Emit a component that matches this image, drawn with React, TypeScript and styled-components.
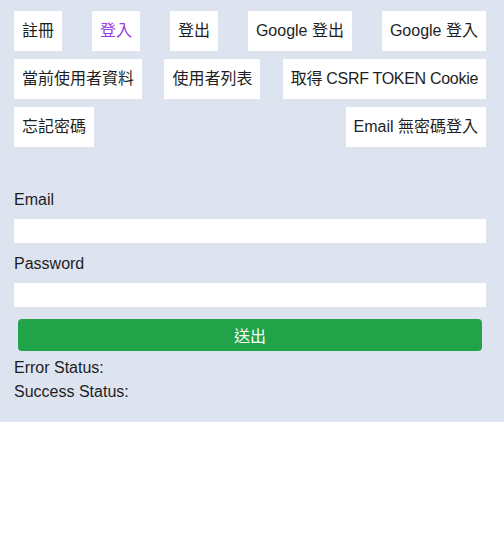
import React from "react";
import styled, { createGlobalStyle } from "styled-components";

const Global = createGlobalStyle`
  html, body {
    margin: 0;
    padding: 0;
    background: #ffffff;
  }
  body {
    font-family: "Liberation Sans", Arial, "Noto Sans CJK TC", sans-serif;
    font-size: 16px;
    color: #1d1d1f;
  }
  * { box-sizing: border-box; }
`;

const Page = styled.div`
  background: #dee4ef;
  padding: 11px 18px 18px 14px;
`;

const Nav = styled.nav`
  display: flex;
  flex-wrap: wrap;
  justify-content: space-between;
  row-gap: 8px;
`;

const NavButton = styled.a<{ $active?: boolean; $tight?: boolean }>`
  display: block;
  background: #ffffff;
  height: 40px;
  line-height: 40px;
  padding: 0 8px;
  font-size: 16px;
  letter-spacing: ${(p) => (p.$tight ? "-0.3px" : "normal")};
  color: ${(p) => (p.$active ? "#9a3ee0" : "#1f1f1f")};
  text-decoration: none;
  white-space: nowrap;
  cursor: pointer;
`;

const Form = styled.form`
  margin-top: 41px;
  display: flex;
  flex-direction: column;
`;

const Label = styled.label`
  display: block;
  line-height: 24px;
  font-size: 16px;
  color: #1d1d1f;
`;

const Input = styled.input<{ $gapAfter: number }>`
  display: block;
  width: 100%;
  height: 24px;
  border: none;
  outline: none;
  background: #ffffff;
  padding: 0 4px;
  margin: 7px 0 ${(p) => p.$gapAfter}px 0;
  font-size: 14px;
  font-family: inherit;
`;

const Submit = styled.button`
  margin: 0 4px;
  height: 32px;
  border: none;
  border-radius: 4px;
  background: #21a34a;
  color: #ffffff;
  font-size: 16px;
  font-family: "Liberation Sans", "Noto Sans CJK TC", sans-serif;
  cursor: pointer;
`;

const Statuses = styled.div`
  margin-top: 5px;
`;

const Status = styled.div`
  line-height: 24px;
  font-size: 16px;
  color: #1d1d1f;
`;

const links: { label: string; active?: boolean; tight?: boolean }[] = [
  { label: "註冊" },
  { label: "登入", active: true },
  { label: "登出" },
  { label: "Google 登出" },
  { label: "Google 登入" },
  { label: "當前使用者資料" },
  { label: "使用者列表" },
  { label: "取得 CSRF TOKEN Cookie", tight: true },
  { label: "忘記密碼" },
  { label: "Email 無密碼登入" },
];

export default function App() {
  return (
    <>
      <Global />
      <Page>
        <Nav>
          {links.map((l) => (
            <NavButton key={l.label} $active={l.active} $tight={l.tight}>
              {l.label}
            </NavButton>
          ))}
        </Nav>
        <Form onSubmit={(e) => e.preventDefault()}>
          <Label htmlFor="email">Email</Label>
          <Input id="email" type="email" $gapAfter={9} />
          <Label htmlFor="password">Password</Label>
          <Input id="password" type="password" $gapAfter={12} />
          <Submit type="submit">送出</Submit>
        </Form>
        <Statuses>
          <Status>Error Status:</Status>
          <Status>Success Status:</Status>
        </Statuses>
      </Page>
    </>
  );
}
